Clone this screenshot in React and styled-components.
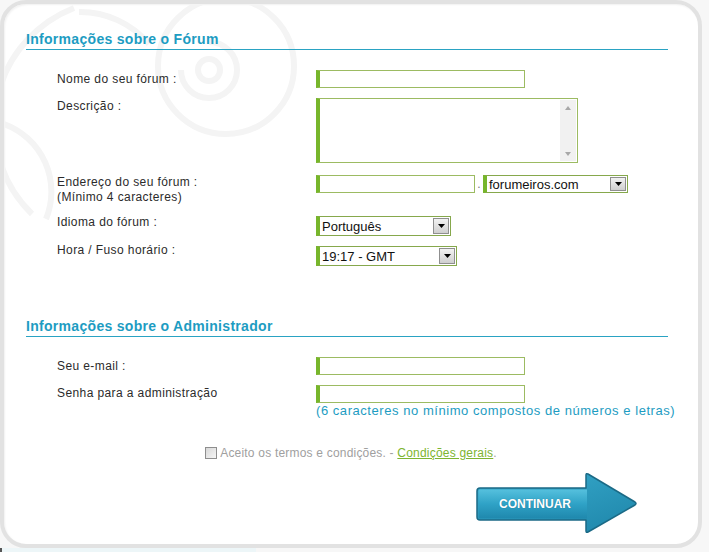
import styled, { createGlobalStyle } from "styled-components";

const GlobalStyle = createGlobalStyle`
  html, body {
    margin: 0;
    padding: 0;
    background: #f7f7f7;
  }
  body {
    font-family: "Liberation Sans", Arial, sans-serif;
  }
`;

const Frame = styled.div`
  position: relative;
  box-sizing: border-box;
  width: 702px;
  height: 548px;
  padding: 27px 30px 0 22px;
  background: #fff;
  border: 4px solid #e2e2e2;
  border-radius: 26px;
  box-shadow: inset 1px 1px 2px rgba(0, 0, 0, 0.06);
  overflow: hidden;
`;

const Swirls = styled.svg`
  position: absolute;
  left: 0;
  top: 0;
  pointer-events: none;
`;

const Content = styled.div`
  position: relative;
  z-index: 1;
`;

const Heading = styled.h2`
  margin: ${(p) => p.$top || 0}px 0 0;
  padding: 0 0 2px;
  font-size: 14px;
  line-height: 16px;
  font-weight: bold;
  letter-spacing: 0.3px;
  color: #1d9cc2;
  border-bottom: 1px solid #2aa3c3;
`;

const Fields = styled.div`
  padding-left: 31px;
`;

const Row = styled.div`
  display: flex;
  align-items: flex-start;
  margin-top: ${(p) => p.$gap}px;
`;

const Label = styled.div`
  flex: 0 0 259px;
  padding-top: ${(p) => p.$pad || 0}px;
  font-size: 12px;
  line-height: 15px;
  letter-spacing: 0.4px;
  color: #2b2b2b;
`;

const Control = styled.div`
  padding-top: ${(p) => p.$shift || 0}px;
`;

const TextInput = styled.input`
  display: block;
  box-sizing: border-box;
  width: ${(p) => p.$w}px;
  height: 18px;
  margin: 0;
  padding: 0 3px;
  border: 1px solid #9cbb62;
  border-left: 4px solid #77b62b;
  background: #fff;
  font: 12px "Liberation Sans", Arial, sans-serif;
  outline: none;
`;

const AreaBox = styled.div`
  box-sizing: border-box;
  display: flex;
  width: 262px;
  height: 65px;
  border: 1px solid #9cbb62;
  border-left: 4px solid #77b62b;
  background: #fff;
`;

const Area = styled.textarea`
  flex: 1;
  margin: 0;
  padding: 2px 3px;
  border: none;
  resize: none;
  overflow: hidden;
  outline: none;
  font: 12px "Liberation Sans", Arial, sans-serif;
`;

const ScrollTrack = styled.div`
  display: flex;
  flex-direction: column;
  justify-content: space-between;
  align-items: center;
  width: 16px;
  margin: 1px 1px 1px 0;
  padding: 6px 0 5px;
  box-sizing: border-box;
  background: #f1f1f1;
`;

const Inline = styled.div`
  display: flex;
  align-items: center;
`;

const Dot = styled.span`
  width: 8px;
  text-align: center;
  font-size: 12px;
  line-height: 18px;
  color: #777;
`;

const SelectBox = styled.div`
  box-sizing: border-box;
  display: flex;
  align-items: center;
  justify-content: space-between;
  width: ${(p) => p.$w}px;
  height: ${(p) => p.$h}px;
  padding: 0 1px 0 2px;
  border: 1px solid #86a84c;
  border-left: 4px solid #77b62b;
  background: #fff;
  font-size: 13px;
  color: #111;
`;

const ArrowBox = styled.span`
  box-sizing: border-box;
  display: flex;
  align-items: center;
  justify-content: center;
  width: 16px;
  height: ${(p) => p.$h}px;
  border: 1px solid #8f8f8f;
  background: linear-gradient(#f2f2f2, #cfcfcf);
`;

const Hint = styled.div`
  font-size: 13px;
  line-height: 16px;
  letter-spacing: 0.55px;
  color: #1d9cc2;
  white-space: nowrap;
`;

const TermsRow = styled.label`
  display: flex;
  justify-content: center;
  align-items: center;
  gap: 3px;
  margin-top: 26px;
  padding-left: 8px;
  font-size: 12px;
  line-height: 16px;
  letter-spacing: 0.2px;
  color: #a0a0a0;
`;

const Check = styled.span`
  box-sizing: border-box;
  width: 12px;
  height: 12px;
  border: 1px solid #8e8e8e;
  background: linear-gradient(135deg, #d8d8d8, #f6f6f6);
`;

const TermsLink = styled.a`
  color: #7db530;
  text-decoration: underline;
`;

const ButtonRow = styled.div`
  display: flex;
  justify-content: flex-end;
  margin-top: 10px;
  padding-right: 29px;
`;

const ArrowButton = styled.button`
  position: relative;
  width: 163px;
  height: 64px;
  padding: 0;
  border: none;
  background: none;
  cursor: pointer;
`;

const ArrowShape = styled.svg`
  position: absolute;
  left: 0;
  top: 0;
`;

const ButtonText = styled.span`
  position: absolute;
  left: 0;
  top: 25px;
  width: 118px;
  text-align: center;
  font-family: "Liberation Sans", Arial, sans-serif;
  font-size: 12px;
  font-weight: bold;
  line-height: 16px;
  color: #fff;
  text-shadow: 0 0 1px rgba(0, 60, 80, 0.4);
`;

const BottomStrip = styled.div`
  width: 254px;
  height: 4px;
  background: #edf6f8;
  border-left: 2px solid #555;
`;

const Down = () => (
  <svg width="7" height="4" viewBox="0 0 7 4">
    <path d="M0 0h7L3.5 4z" fill="#000" />
  </svg>
);

const Select = ({ w, h, children }) => (
  <SelectBox $w={w} $h={h}>
    <span>{children}</span>
    <ArrowBox $h={h - 4}>
      <Down />
    </ArrowBox>
  </SelectBox>
);

export default function App() {
  return (
    <>
      <GlobalStyle />
      <Frame>
        <Swirls width="330" height="300" viewBox="0 0 330 300" fill="none" stroke="#f4f4f4" strokeWidth="6">
          <circle cx="205" cy="66" r="11" />
          <path d="M205 38 A28 28 0 1 1 177 66" />
          <circle cx="222" cy="62" r="68" />
          <path d="M70 4 A125 125 0 0 0 28 210" />
          <path d="M0 120 A72 72 0 0 1 42 215" />
          <path d="M75 8 A90 90 0 0 1 145 40" />
        </Swirls>
        <Content>
          <Heading>Informações sobre o Fórum</Heading>
          <Fields>
            <Row $gap={20}>
              <Label $pad={2}>Nome do seu fórum :</Label>
              <Control>
                <TextInput $w={209} />
              </Control>
            </Row>
            <Row $gap={10}>
              <Label $pad={1}>Descrição :</Label>
              <Control>
                <AreaBox>
                  <Area />
                  <ScrollTrack>
                    <svg width="6" height="4" viewBox="0 0 6 4">
                      <path d="M0 4h6L3 0z" fill="#a8a8a8" />
                    </svg>
                    <svg width="6" height="4" viewBox="0 0 6 4">
                      <path d="M0 0h6L3 4z" fill="#a8a8a8" />
                    </svg>
                  </ScrollTrack>
                </AreaBox>
              </Control>
            </Row>
            <Row $gap={12}>
              <Label>
                Endereço do seu fórum :
                <br />
                (Mínimo 4 caracteres)
              </Label>
              <Control>
                <Inline>
                  <TextInput $w={159} />
                  <Dot>.</Dot>
                  <Select w={145} h={18}>forumeiros.com</Select>
                </Inline>
              </Control>
            </Row>
            <Row $gap={10}>
              <Label>Idioma do fórum :</Label>
              <Control $shift={1}>
                <Select w={135} h={20}>Português</Select>
              </Control>
            </Row>
            <Row $gap={7}>
              <Label>Hora / Fuso horário :</Label>
              <Control $shift={3}>
                <Select w={141} h={20}>19:17 - GMT</Select>
              </Control>
            </Row>
          </Fields>

          <Heading $top={52}>Informações sobre o Administrador</Heading>
          <Fields>
            <Row $gap={20}>
              <Label $pad={2}>Seu e-mail :</Label>
              <Control>
                <TextInput $w={209} />
              </Control>
            </Row>
            <Row $gap={10}>
              <Label $pad={1}>Senha para a administração</Label>
              <Control>
                <TextInput $w={209} type="password" />
                <Hint>(6 caracteres no mínimo compostos de números e letras)</Hint>
              </Control>
            </Row>
          </Fields>

          <TermsRow>
            <Check />
            <span>
              Aceito os termos e condições. - <TermsLink href="#">Condições gerais</TermsLink>.
            </span>
          </TermsRow>

          <ButtonRow>
            <ArrowButton type="button">
              <ArrowShape width="163" height="64" viewBox="0 0 163 64">
                <defs>
                  <linearGradient id="bodyFill" x1="0" y1="0" x2="0" y2="1">
                    <stop offset="0" stopColor="#55c0dd" />
                    <stop offset="0.5" stopColor="#2fa2c6" />
                    <stop offset="1" stopColor="#1f88ad" />
                  </linearGradient>
                  <linearGradient id="headFill" x1="0" y1="0" x2="1" y2="1">
                    <stop offset="0" stopColor="#3aaed0" />
                    <stop offset="1" stopColor="#1e85a9" />
                  </linearGradient>
                </defs>
                <path
                  d="M112 3 L159 31 Q161 32.5 159 34 L112 61 Q110 62 110 60 V49 H4 Q1 49 1 46 V20 Q1 17 4 17 H110 V4 Q110 2 112 3 Z"
                  fill="url(#headFill)"
                  stroke="#1b6a86"
                  strokeWidth="1.5"
                  strokeLinejoin="round"
                />
                <path d="M2.5 20 Q2.5 18.5 4 18.5 H111 V47.5 H4 Q2.5 47.5 2.5 46 Z" fill="url(#bodyFill)" />
              </ArrowShape>
              <ButtonText>CONTINUAR</ButtonText>
            </ArrowButton>
          </ButtonRow>
        </Content>
      </Frame>
      <BottomStrip />
    </>
  );
}
